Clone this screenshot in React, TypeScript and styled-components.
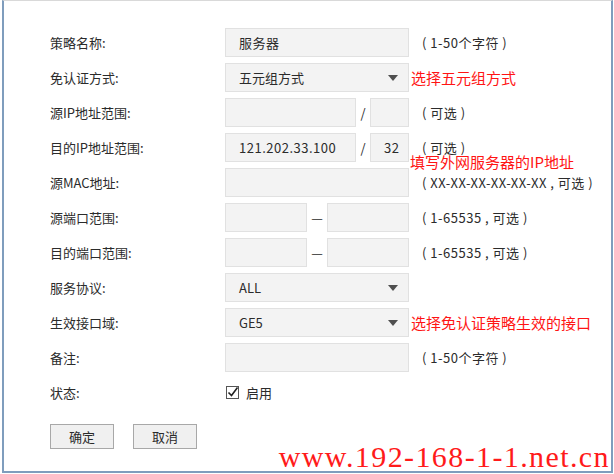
import React from 'react';
import styled, { createGlobalStyle } from 'styled-components';

const GlobalStyle = createGlobalStyle`
  html, body {
    margin: 0;
    padding: 0;
    background: #ffffff;
  }
  body {
    font-family: "Noto Sans CJK SC", "Microsoft YaHei", sans-serif;
    font-size: 13px;
    color: #2b2b2b;
  }
`;

const Panel = styled.div`
  position: relative;
  box-sizing: border-box;
  width: 611px;
  height: 473px;
  margin-left: 2px;
  padding: 27px 0 0 46px;
  border-top: 1px solid #d9d9d9;
  border-left: 2px solid #7f9dbd;
  border-right: 2px solid #7f9dbd;
  border-bottom: 2px solid #7f9dbd;
  background: #ffffff;
`;

const Form = styled.div`
  display: flex;
  flex-direction: column;
  gap: 6px;
`;

const Row = styled.div`
  position: relative;
  display: grid;
  grid-template-columns: 175px 184px 1fr;
  align-items: center;
  height: 29px;
`;

const Label = styled.div`
  font-size: 13px;
  color: #2b2b2b;
  white-space: nowrap;
`;

const Box = styled.div<{ $width?: number }>`
  box-sizing: border-box;
  display: flex;
  align-items: center;
  width: ${({ $width }) => ($width ? `${$width}px` : '100%')};
  height: 29px;
  padding: 0 10px 0 13px;
  background: #f3f3f3;
  border: 1px solid #e1e1e1;
  font-size: 13px;
  letter-spacing: 0.5px;
  color: #2b2b2b;
`;

const SelectBox = styled(Box)`
  justify-content: space-between;
  letter-spacing: 0;
`;

const Caret = styled.span`
  width: 0;
  height: 0;
  border-left: 5px solid transparent;
  border-right: 5px solid transparent;
  border-top: 6px solid #4f4f4f;
`;

const Pair = styled.div`
  display: flex;
  align-items: center;
`;

const Sep = styled.span<{ $width: number }>`
  width: ${({ $width }) => $width}px;
  text-align: center;
  font-size: 13px;
  color: #2b2b2b;
`;

const Hint = styled.div`
  padding-left: 13px;
  font-size: 13px;
  letter-spacing: 0.5px;
  color: #2b2b2b;
  white-space: pre;
`;

const Note = styled.div<{ $float?: boolean }>`
  padding-left: 2px;
  font-size: 15px;
  color: #ff1414;
  white-space: nowrap;
  ${({ $float }) =>
    $float
      ? `
    position: absolute;
    left: 358px;
    top: 18px;
  `
      : ''}
`;

const Check = styled.label`
  display: flex;
  align-items: center;
  gap: 7px;
  padding-left: 1px;
  font-size: 13px;
  color: #2b2b2b;
`;

const Buttons = styled.div`
  display: flex;
  gap: 19px;
  margin-top: 17px;
`;

const Btn = styled.button`
  box-sizing: border-box;
  width: 64px;
  height: 25px;
  padding: 0;
  background: #f0f0f0;
  border: 1px solid #a8a8a8;
  font-family: "Noto Sans CJK SC", sans-serif;
  font-size: 13px;
  color: #2b2b2b;
`;

const Watermark = styled.div`
  position: absolute;
  right: 1px;
  bottom: -3px;
  font-family: "Liberation Serif", serif;
  font-size: 30px;
  letter-spacing: 1.4px;
  color: #ff1a1a;
  white-space: nowrap;
`;

function CheckIcon() {
  return (
    <svg width="13" height="13" viewBox="0 0 13 13">
      <rect x="0.5" y="0.5" width="12" height="12" fill="#fff" stroke="#555" />
      <path d="M2.5 6.5 L5.5 9.5 L11.5 1.5" fill="none" stroke="#222" strokeWidth="1.6" />
    </svg>
  );
}

export default function App() {
  return (
    <>
      <GlobalStyle />
      <Panel>
        <Form>
          <Row>
            <Label>策略名称:</Label>
            <Box>服务器</Box>
            <Hint>( 1-50个字符 )</Hint>
          </Row>
          <Row>
            <Label>免认证方式:</Label>
            <SelectBox>
              五元组方式
              <Caret />
            </SelectBox>
            <Note>选择五元组方式</Note>
          </Row>
          <Row>
            <Label>源IP地址范围:</Label>
            <Pair>
              <Box $width={131} />
              <Sep $width={14}>/</Sep>
              <Box $width={39} />
            </Pair>
            <Hint>( 可选 )</Hint>
          </Row>
          <Row>
            <Label>目的IP地址范围:</Label>
            <Pair>
              <Box $width={131}>121.202.33.100</Box>
              <Sep $width={14}>/</Sep>
              <Box $width={39}>32</Box>
            </Pair>
            <Hint>( 可选 )</Hint>
            <Note $float>填写外网服务器的IP地址</Note>
          </Row>
          <Row>
            <Label>源MAC地址:</Label>
            <Box />
            <Hint>( XX-XX-XX-XX-XX-XX , 可选 )</Hint>
          </Row>
          <Row>
            <Label>源端口范围:</Label>
            <Pair>
              <Box $width={82} />
              <Sep $width={20}>—</Sep>
              <Box $width={82} />
            </Pair>
            <Hint>( 1-65535 , 可选 )</Hint>
          </Row>
          <Row>
            <Label>目的端口范围:</Label>
            <Pair>
              <Box $width={82} />
              <Sep $width={20}>—</Sep>
              <Box $width={82} />
            </Pair>
            <Hint>( 1-65535 , 可选 )</Hint>
          </Row>
          <Row>
            <Label>服务协议:</Label>
            <SelectBox>
              ALL
              <Caret />
            </SelectBox>
          </Row>
          <Row>
            <Label>生效接口域:</Label>
            <SelectBox>
              GE5
              <Caret />
            </SelectBox>
            <Note>选择免认证策略生效的接口</Note>
          </Row>
          <Row>
            <Label>备注:</Label>
            <Box />
            <Hint>( 1-50个字符 )</Hint>
          </Row>
          <Row>
            <Label>状态:</Label>
            <Check>
              <CheckIcon />
              启用
            </Check>
          </Row>
        </Form>
        <Buttons>
          <Btn>确定</Btn>
          <Btn>取消</Btn>
        </Buttons>
        <Watermark>www.192-168-1-1.net.cn</Watermark>
      </Panel>
    </>
  );
}
